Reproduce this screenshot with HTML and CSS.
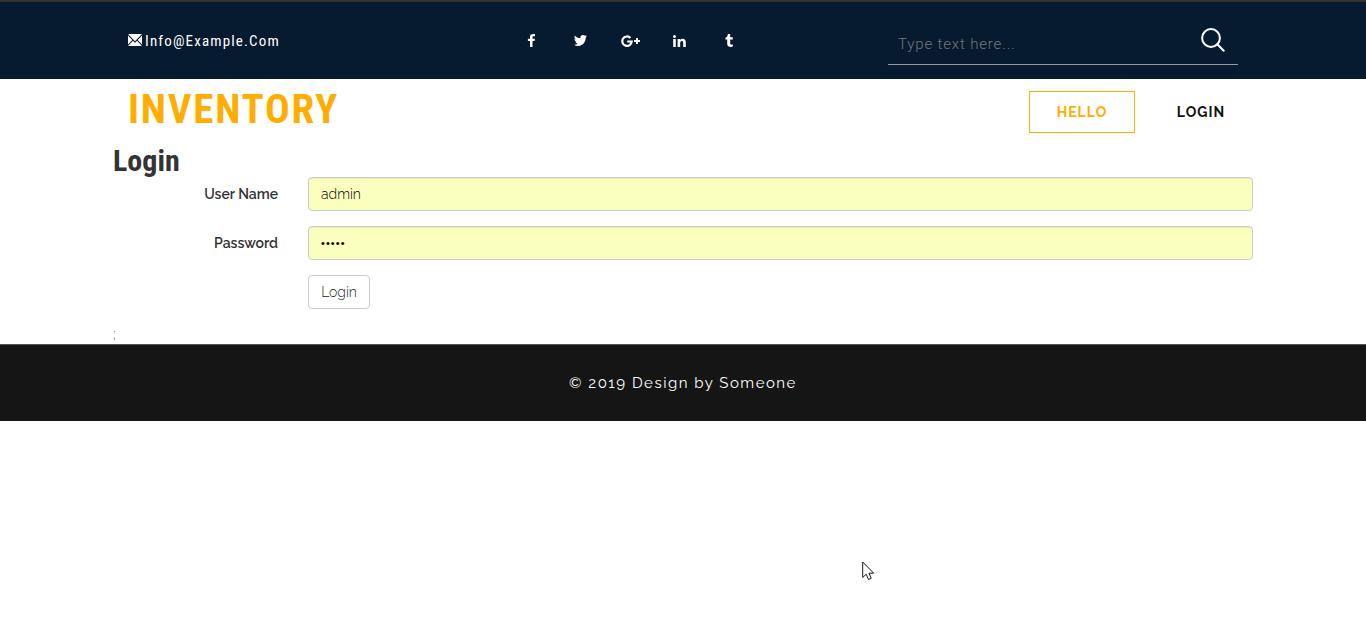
FILE: index.html
```html
<!DOCTYPE html>
<html lang="en">
<head>
<meta charset="utf-8">
<title>Inventory</title>
<link rel="stylesheet" href="styles.css">
</head>
<body>
<header class="topbar">
  <div class="container topbar-row">
    <a class="mail">
      <svg class="mail-icon" width="14" height="12" viewBox="0 0 15 12" preserveAspectRatio="none"><path fill="#fff" d="M0 0h15L7.5 7.2zM0 1.6 4.6 6 0 10.4zM15 1.6 10.4 6 15 10.4zM0 12l5.3-5.2 2.2 2 2.2-2L15 12z"/></svg>
      <span class="mail-text">Info@Example.Com</span>
    </a>
    <nav class="social">
      <svg width="8" height="13" viewBox="0 0 8 13"><path fill="#fff" d="M8 .1v2.1H6.7c-1 0-1.2.5-1.2 1.1v1.4h2.4l-.3 2.4H5.500V13H3V7.100H.900V4.700H3V2.900C3 .900 4.200 0 6.100 0 7 0 7.700 0 8 .1z"/></svg>
      <svg width="13" height="11" viewBox="0 0 13 11"><path fill="#fff" d="M13 1.300 11.700 2.700C11.800 7 8.500 11 4.100 11 2.600 11 1.200 10.600 0 9.800c1.400.1 2.700-.2 3.900-1.100-1.200 0-2.100-.8-2.500-1.900h1.200C1.300 6.500.500 5.400.500 4.100l1.200.3C.500 3.500.200 1.900.900.500c1.400 1.700 3.300 2.700 5.500 2.800C6 1.500 7.300 0 9 0c.8 0 1.500.300 1.900.8L12.600.200 11.500 1.700z"/></svg>
      <svg width="19" height="12" viewBox="0 0 19 12"><path fill="none" stroke="#fff" stroke-width="2.200" d="M9.400 2.900A4.700 4.700 0 1 0 10.700 6.500H6.200"/><path fill="none" stroke="#fff" stroke-width="2" d="M13 6h6M16 3v6"/></svg>
      <svg width="13" height="12" viewBox="0 0 13 12"><path fill="#fff" d="M.2 4h2.600v8H.2zM4.600 4h2.500v1.100C8.400 3.200 12.800 3.200 12.800 7.300V12h-2.600V7.700c0-2.300-3-2.200-3 0V12H4.600z"/><circle cx="1.500" cy="1.500" r="1.500" fill="#fff"/></svg>
      <svg width="8" height="13" viewBox="0 0 8 13"><path fill="#fff" d="M2.900 0h2.300v3.300h2.600v2.300H5.200v3.700c0 1.700 1.600 1.500 2.500 1l.3 2C6.300 13.400 2.200 13.400 2.200 10V5.600H.4V3.800C2 3.200 2.700 2 2.900 0z"/></svg>
    </nav>
    <form class="search">
      <input class="search-input" type="text" placeholder="Type text here...">
      <svg class="search-icon" width="24" height="24" viewBox="0 0 24 24"><g fill="none" stroke="#fff" stroke-width="2"><circle cx="10" cy="10" r="8.900"/><path d="m16.300 16.300 6.400 6.400" stroke-linecap="round"/></g></svg>
    </form>
  </div>
</header>
<div class="container brandbar">
  <h1 class="brand">INVENTORY</h1>
  <nav class="menu"><a class="menu-item menu-active">HELLO</a><a class="menu-item">LOGIN</a></nav>
</div>
<main class="container content">
  <h2 class="title">Login</h2>
  <div class="row"><label class="label">User Name</label><input class="field" type="text" value="admin"></div>
  <div class="row"><label class="label">Password</label><input class="field field-password" type="password" value="admin"></div>
  <div class="row"><span class="label"></span><button class="btn" type="button">Login</button></div>
  <p class="stray">;</p>
</main>
<footer class="footer"><p class="copy">© 2019 Design by Someone</p></footer>
<svg class="cursor" width="13" height="20" viewBox="0 0 13 20"><path fill="#fff" stroke="#15151f" d="M.7 1v15.500l3.500-3.300 2.300 5.300 2.700-1.200L7 12.200h4.700z"/></svg>
</body>
</html>
```
FILE: styles.css
```css
* { box-sizing: border-box; }
body { margin: 0; background: #fff; font-family: Raleway, Lato, sans-serif; font-size: 14px; color: #333; }
h1, h2, p { margin: 0; }
.container { width: 1140px; margin: 0 auto; }
.topbar { height: 79px; background: #061a30; border-top: 2px solid #333; }
.topbar-row { height: 77px; display: flex; padding: 0 15px; }
.mail { width: 399px; display: flex; padding-top: 32px; color: #fff; gap: 3px; }
.mail-text { font: 450 15px/18px "Roboto Condensed", Roboto, sans-serif; font-stretch: 75%; letter-spacing: 1.150px; margin-top: -2px; }
.social { width: 208px; height: 77px; display: grid; grid-template-columns: 47px 47px 52px 52px 8px; align-items: center; }
.search { margin-left: auto; width: 350px; height: 63px; border-bottom: 1px solid #999; display: flex; justify-content: space-between; padding: 26px 13px 0 10px; }
.search-input { border: 0; padding: 2px 0 0; background: none; outline: 0; width: 200px; height: 30px; font: 300 15px Roboto, sans-serif; letter-spacing: .850px; }
.search-input::placeholder { color: #777; }
.brandbar { height: 66px; display: flex; justify-content: space-between; padding: 0 0 0 15px; }
.brand { font: 700 41px/60px "Roboto Condensed", Roboto, sans-serif; font-stretch: 75%; letter-spacing: 1.800px; color: #ffad01; }
.menu { display: flex; padding-top: 12px; gap: 14px; }
.menu-item { height: 42px; width: 104px; text-align: center; border: 1px solid transparent; font-weight: 700; line-height: 40px; letter-spacing: 1px; color: #111; }
.menu-active { width: 106px; border-color: #ffad01; color: #ffad01; }
.content { height: 199px; }
.title { font: 700 30px/32px "Roboto Condensed", Roboto, sans-serif; font-stretch: 75%; }
.row { display: flex; gap: 30px; height: 34px; margin-bottom: 15px; }
.label { width: 165px; text-align: right; font-weight: 650; line-height: 34px; }
.field { width: 945px; height: 34px; border: 1px solid #ccc; border-radius: 4px; background: #faffbd; padding: 6px 12px; font: 300 14px Raleway, Lato, sans-serif; color: #000; box-shadow: inset 0 1px 1px rgba(0,0,0,.075); outline: 0; }
.field-password { font: 400 11px "Liberation Sans", sans-serif; letter-spacing: 1.080px; padding-bottom: 7px; }
.btn { width: 62px; height: 34px; padding: 0; border: 1px solid #ccc; border-radius: 4px; background: #fff; font: 300 14px Raleway, Lato, sans-serif; color: #222; }
.stray { font-weight: 300; line-height: 20px; margin-top: 2px; color: #333; }
.footer { height: 77px; background: #151515; border-top: 1px solid #555; color: #fff; text-align: center; }
.copy { font-size: 15px; font-weight: 450; line-height: 76px; letter-spacing: 1.500px; }
.cursor { position: absolute; left: 862px; top: 561px; }
```
